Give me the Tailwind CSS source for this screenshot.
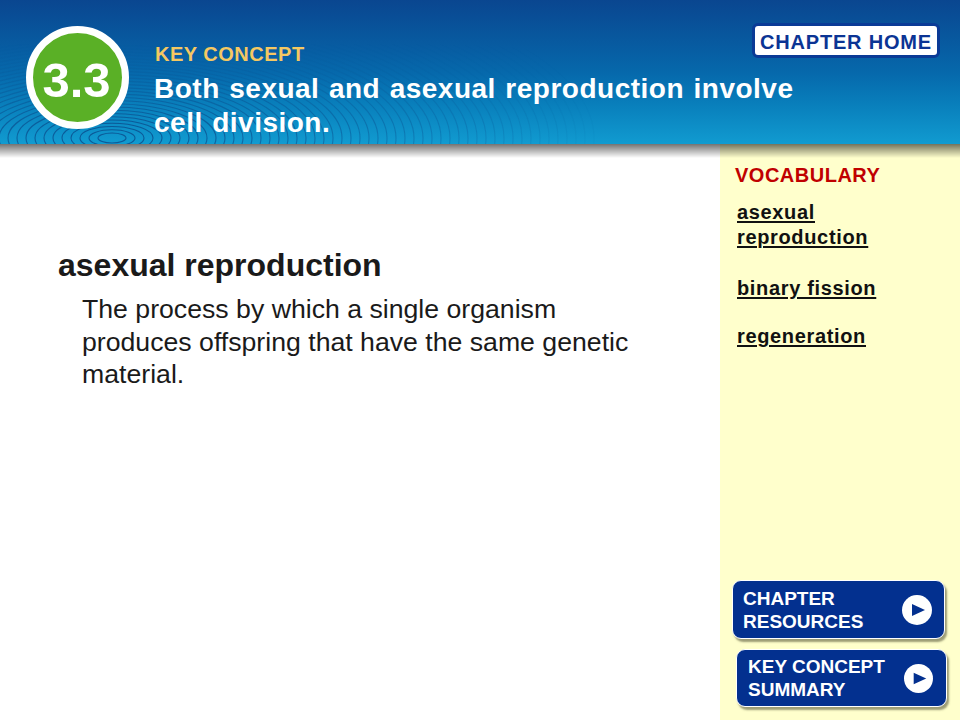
<!DOCTYPE html>
<html lang="en">
<head>
    <meta charset="UTF-8">
    <title>Key Concept 3.3</title>
    <script src="https://cdn.jsdelivr.net/npm/@tailwindcss/browser@4"></script>
</head>
<body class="bg-white">
    <div class="w-[960px] h-[720px] overflow-hidden flex flex-col font-['Liberation_Sans',Arial,sans-serif]">

        <!-- Header band -->
        <header class="relative z-10 h-[144px] shrink-0 flex items-start bg-gradient-to-b from-[#0a4690] via-[#0668ab] to-[#119bd0]">
            <!-- ripple rings, filled in by the script below -->
            <svg id="ripples" class="absolute inset-0 [mask-image:linear-gradient(to_bottom,transparent_30%,black_85%)]" width="960" height="144" viewBox="0 0 960 144" fill="none" stroke="#0b4f8e" stroke-width="1.1"></svg>

            <!-- shadow under the band -->
            <div class="absolute left-0 right-0 top-full h-[14px] bg-gradient-to-b from-black/55 to-transparent"></div>

            <div class="relative ml-[26px] mt-[26px] w-[103px] h-[103px] shrink-0 rounded-full bg-[#5ab026] border-[7px] border-white flex items-center justify-center">
                <span class="pt-[5px] pr-[2px] text-[49px] leading-none font-bold text-white">3.3</span>
            </div>

            <div class="relative ml-[25px] mt-[43px] w-[660px]">
                <p class="ml-px text-[20px] leading-[22px] font-bold tracking-[0.5px] text-[#f5c862]">KEY CONCEPT</p>
                <h1 class="mt-[7px] text-[28px] leading-[34px] font-bold tracking-[0.5px] [word-spacing:1.2px] text-white">Both sexual and asexual reproduction involve cell division.</h1>
            </div>

            <a href="#" class="absolute left-[752px] top-[23px] w-[188px] h-[35px] pt-[2px] flex items-center justify-center rounded-[6px] bg-white border-[3px] border-[#0a3a96] text-[20px] font-bold tracking-[0.8px] text-[#0b3494]">CHAPTER HOME</a>
        </header>

        <div class="flex-1 flex min-h-0">
            <!-- Main content -->
            <main class="flex-1 pt-[102px] pl-[58px]">
                <h2 class="text-[32px] leading-[38px] font-bold text-[#1a1a1a]">asexual reproduction</h2>
                <p class="mt-[9px] ml-[24px] w-[560px] text-[26.67px] leading-[32.5px] text-[#1a1a1a]">The process by which a single organism produces offspring that have the same genetic material.</p>
            </main>

            <!-- Vocabulary sidebar -->
            <aside class="w-[240px] shrink-0 bg-[#ffffcc] flex flex-col pt-[19px]">
                <p class="ml-[15px] text-[20px] leading-[24px] font-bold tracking-[0.5px] text-[#c00000]">VOCABULARY</p>
                <nav class="ml-[17px] mt-[13px] flex flex-col text-[20px] leading-[25px] font-bold tracking-[0.65px] text-[#111] underline underline-offset-2 decoration-2">
                    <a href="#" class="w-[150px]">asexual reproduction</a>
                    <a href="#" class="mt-[26px]">binary fission</a>
                    <a href="#" class="mt-[23px]">regeneration</a>
                </nav>

                <div class="mt-auto pb-[13px] flex flex-col">
                    <a href="#" class="ml-[12px] w-[213px] h-[59px] flex items-center justify-between pl-[10px] pr-[12px] rounded-[9px] bg-[#03308f] border border-white shadow-[2px_3px_2px_rgba(90,90,60,0.6)] text-white font-bold text-[19px] leading-[23px]">
                        <span>CHAPTER<br>RESOURCES</span>
                        <svg width="30" height="30" viewBox="0 0 30 30"><circle cx="15" cy="15" r="15" fill="#fff"/><path d="M10 9 L23 15 L10 21 Z" fill="#03308f"/></svg>
                    </a>
                    <a href="#" class="ml-[16px] mt-[10px] w-[211px] h-[58px] flex items-center justify-between pl-[11px] pr-[13px] rounded-[9px] bg-[#03308f] border border-white shadow-[2px_3px_2px_rgba(90,90,60,0.6)] text-white font-bold text-[19px] leading-[23px]">
                        <span>KEY CONCEPT<br>SUMMARY</span>
                        <svg width="29" height="29" viewBox="0 0 30 30"><circle cx="15" cy="15" r="15" fill="#fff"/><path d="M10 9 L23 15 L10 21 Z" fill="#03308f"/></svg>
                    </a>
                </div>
            </aside>
        </div>
    </div>

    <script>
        const ripples = document.getElementById('ripples');
        for (let rx = 14; rx <= 490; rx += 9) {
            const ring = document.createElementNS('http://www.w3.org/2000/svg', 'ellipse');
            ring.setAttribute('cx', 112);
            ring.setAttribute('cy', 138);
            ring.setAttribute('rx', rx);
            ring.setAttribute('ry', rx * 0.36);
            // rings get fainter going outwards, gone by the last one
            ring.setAttribute('stroke-opacity', (0.9 * (1 - rx / 500)).toFixed(2));
            ripples.appendChild(ring);
        }
    </script>
</body>
</html>
